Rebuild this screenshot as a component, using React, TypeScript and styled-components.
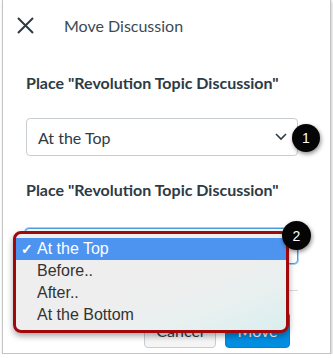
import React from "react"
import styled, { createGlobalStyle } from "styled-components"

const GlobalStyle = createGlobalStyle`
  html, body {
    margin: 0;
    padding: 0;
    background: #ffffff;
  }
  body {
    font-family: Lato, "Open Sans", sans-serif;
    color: #2d3b45;
  }
`

const Panel = styled.div`
  box-sizing: border-box;
  width: 329px;
  height: 354px;
  margin-left: 2px;
  border: 1px solid #c4c4c4;
  border-top: none;
  background: #ffffff;
  box-shadow: 1px 1px 3px rgba(0, 0, 0, 0.22);
  display: flex;
  flex-direction: column;
`

const Header = styled.div`
  height: 50px;
  display: flex;
  align-items: center;
  padding-left: 13px;
  gap: 29px;
`

const Title = styled.span`
  font-family: Lato, sans-serif;
  font-size: 16px;
  color: #3b4a55;
`

const Body = styled.div`
  padding: 0 32px 0 23px;
  display: flex;
  flex-direction: column;
`

const Label = styled.div<{ $top: number }>`
  margin-top: ${(p) => p.$top}px;
  font-family: Lato, sans-serif;
  font-weight: 700;
  font-size: 16px;
  line-height: 20px;
  color: #2d3b45;
  white-space: nowrap;
`

const SelectWrap = styled.div<{ $top: number }>`
  position: relative;
  margin-top: ${(p) => p.$top}px;
`

const SelectBox = styled.div<{ $focused?: boolean }>`
  box-sizing: border-box;
  height: ${(p) => (p.$focused ? 36 : 38)}px;
  margin-left: ${(p) => (p.$focused ? -1 : 0)}px;
  border: 1px solid ${(p) => (p.$focused ? "#4a9be4" : "#c7cdd1")};
  box-shadow: ${(p) => (p.$focused ? "0 0 0 1px #a9d0f3" : "none")};
  border-radius: 4px;
  background: #ffffff;
  display: flex;
  align-items: center;
  justify-content: space-between;
  padding: 0 10px 0 11px;
  font-family: Lato, sans-serif;
  font-size: 16px;
  color: #2d3b45;
`

const Badge = styled.div<{ $left: number; $top: number; $size: number }>`
  position: absolute;
  left: ${(p) => p.$left}px;
  top: ${(p) => p.$top}px;
  width: ${(p) => p.$size}px;
  height: ${(p) => p.$size}px;
  border-radius: 50%;
  background: #050505;
  color: #ffffff;
  font-family: "Liberation Sans", Arial, sans-serif;
  font-size: 14px;
  display: flex;
  align-items: center;
  justify-content: center;
  box-shadow: 1px 2px 4px rgba(0, 0, 0, 0.45);
  z-index: 3;
`

const Menu = styled.div`
  position: absolute;
  left: -13px;
  top: 3px;
  box-sizing: border-box;
  width: 276px;
  height: 102px;
  border: 3px solid #a0080c;
  border-radius: 8px;
  padding: 4px 0;
  background: linear-gradient(160deg, #eeeeee 55%, #e9f0f0 75%, #d9eeee 100%);
  box-shadow: 0 3px 6px rgba(0, 0, 0, 0.35);
  z-index: 2;
`

const MenuItem = styled.div<{ $active?: boolean }>`
  position: relative;
  height: 22px;
  display: flex;
  align-items: center;
  padding-left: 21px;
  background: ${(p) => (p.$active ? "#4d93f0" : "transparent")};
  color: ${(p) => (p.$active ? "#ffffff" : "#333333")};
  font-family: "Liberation Sans", Arial, sans-serif;
  font-size: 16px;
`

const Check = styled.span`
  position: absolute;
  left: 5px;
  font-size: 14px;
  font-weight: 700;
`

const Footer = styled.div`
  margin-top: 26px;
  border-top: 1px solid #d6dadd;
  padding: 21px 8px 0 0;
  display: flex;
  justify-content: flex-end;
  gap: 9px;
`

const Button = styled.div<{ $primary?: boolean }>`
  box-sizing: border-box;
  height: 36px;
  width: ${(p) => (p.$primary ? 65 : 72)}px;
  border-radius: 4px;
  border: 1px solid ${(p) => (p.$primary ? "#0084d1" : "#c7cdd1")};
  background: ${(p) => (p.$primary ? "#008ee2" : "#f5f5f5")};
  color: ${(p) => (p.$primary ? "#ffffff" : "#2d3b45")};
  font-family: Lato, sans-serif;
  font-size: 16px;
  display: flex;
  align-items: center;
  justify-content: center;
`

const CloseIcon = () => (
  <svg width="19" height="19" viewBox="0 0 19 19">
    <path d="M2 2 L17 17 M17 2 L2 17" stroke="#2d3b45" strokeWidth="2" fill="none" />
  </svg>
)

const Chevron = () => (
  <svg width="12" height="8" viewBox="0 0 12 8">
    <polyline points="1,1 6,6 11,1" stroke="#2d3b45" strokeWidth="1.6" fill="none" />
  </svg>
)

const options = ["At the Top", "Before..", "After..", "At the Bottom"]

const App: React.FC = () => {
  return (
    <>
      <GlobalStyle />
      <Panel>
        <Header>
          <CloseIcon />
          <Title>Move Discussion</Title>
        </Header>
        <Body>
          <Label $top={23}>Place "Revolution Topic Discussion"</Label>
          <SelectWrap $top={25}>
            <SelectBox>
              At the Top
              <Chevron />
            </SelectBox>
            <Badge $left={266} $top={6} $size={28}>1</Badge>
          </SelectWrap>
          <Label $top={24}>Place "Revolution Topic Discussion"</Label>
          <SelectWrap $top={28}>
            <SelectBox $focused />
            <Menu>
              {options.map((o, i) => (
                <MenuItem key={o} $active={i === 0}>
                  {i === 0 && <Check>✓</Check>}
                  {o}
                </MenuItem>
              ))}
            </Menu>
            <Badge $left={256} $top={-7} $size={29}>2</Badge>
          </SelectWrap>
          <Footer>
            <Button>Cancel</Button>
            <Button $primary>Move</Button>
          </Footer>
        </Body>
      </Panel>
    </>
  )
}

export default App
